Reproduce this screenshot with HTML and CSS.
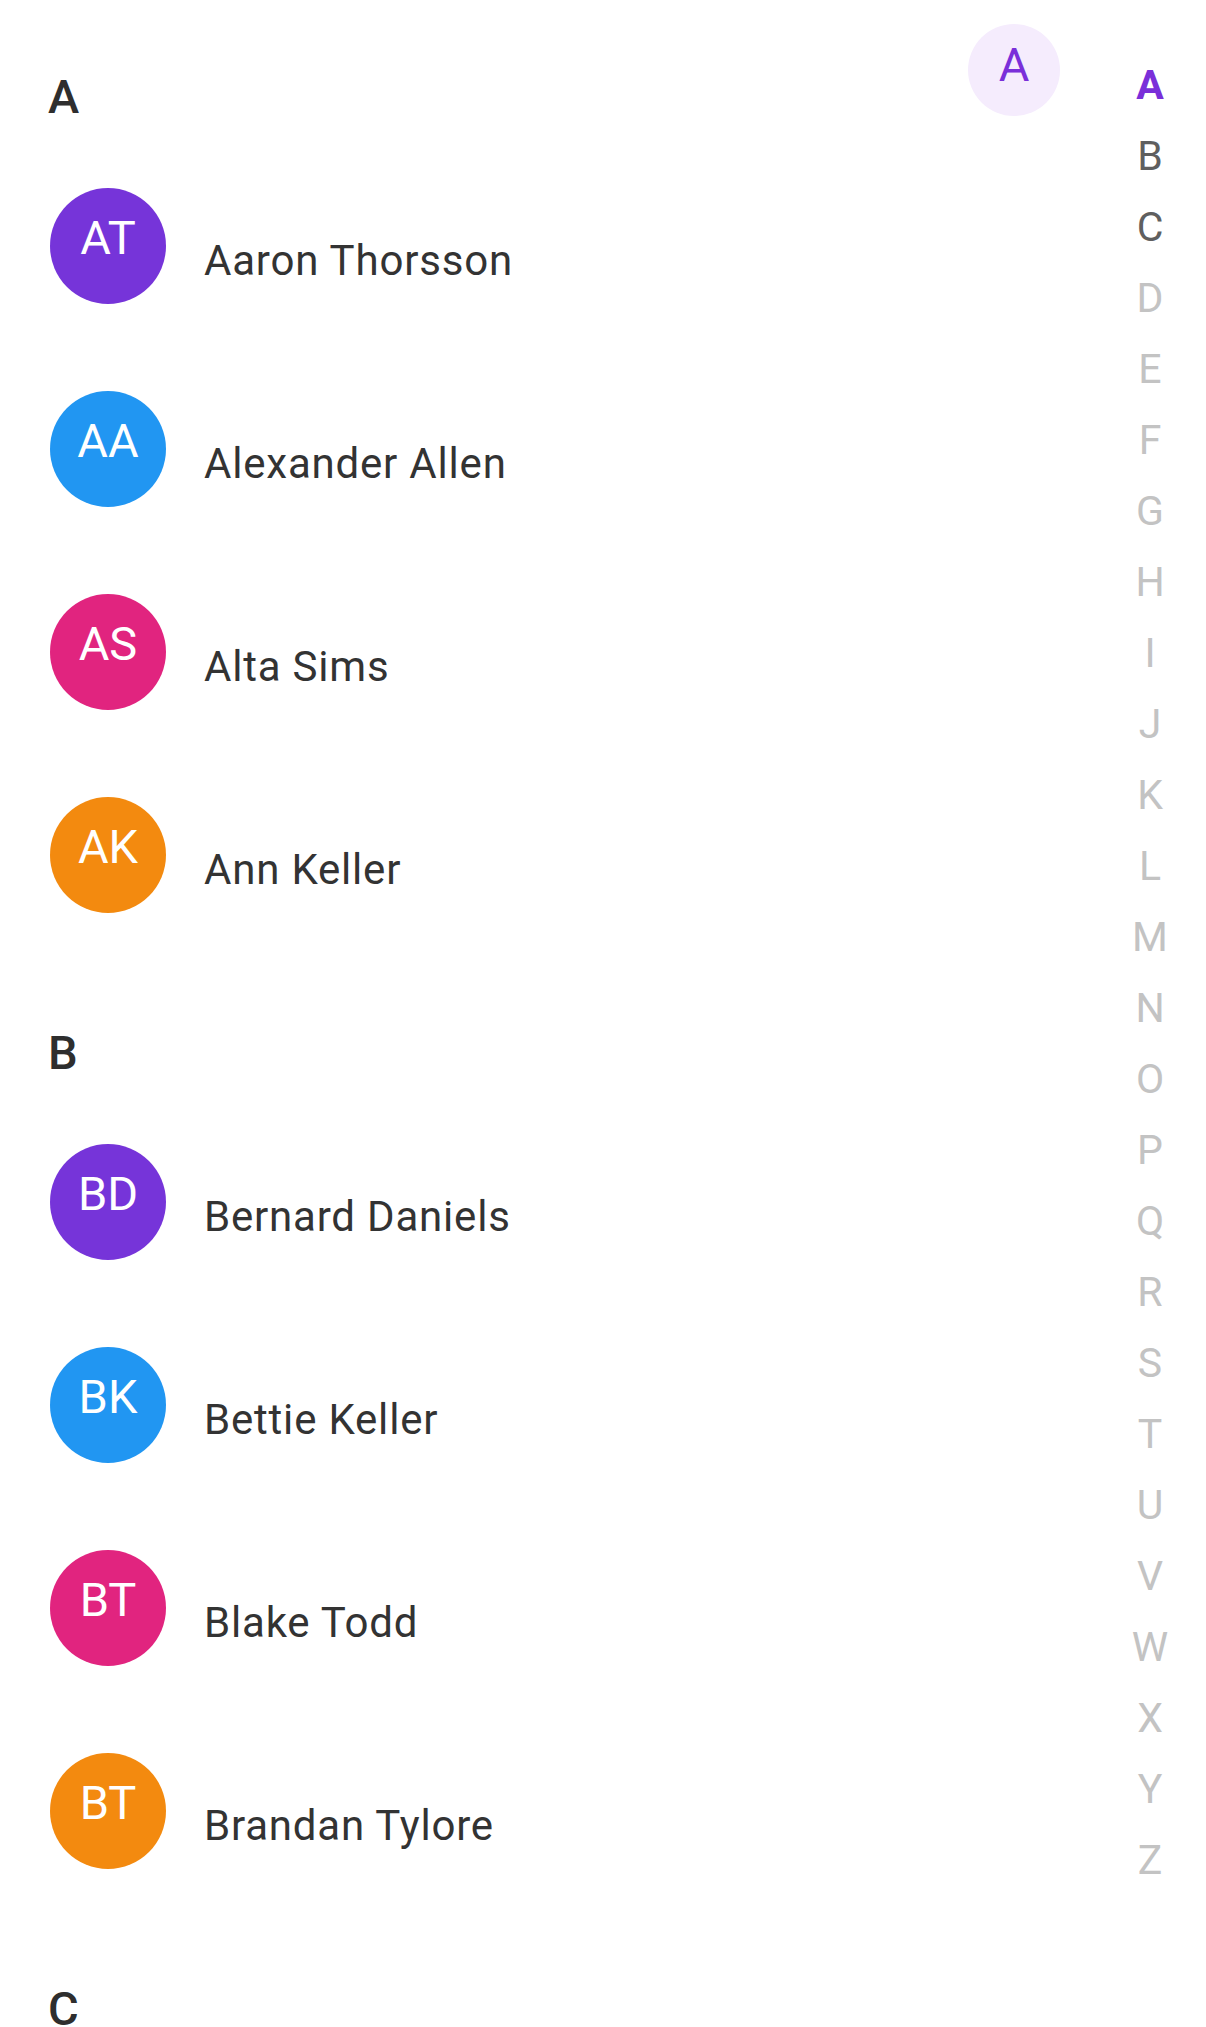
FILE: index.html
```html
<!DOCTYPE html>
<html lang="en">
<head>
<meta charset="utf-8">
<title>Contacts</title>
<link rel="stylesheet" href="styles.css">
</head>
<body>
<div class="app">
  <main class="list">
    <section class="section">
      <h2 class="section-title">A</h2>
      <div class="row"><div class="avatar purple"><span>AT</span></div><div class="name">Aaron Thorsson</div></div>
      <div class="row"><div class="avatar blue"><span>AA</span></div><div class="name">Alexander Allen</div></div>
      <div class="row"><div class="avatar pink"><span>AS</span></div><div class="name">Alta Sims</div></div>
      <div class="row"><div class="avatar orange"><span>AK</span></div><div class="name">Ann Keller</div></div>
    </section>
    <section class="section">
      <h2 class="section-title">B</h2>
      <div class="row"><div class="avatar purple"><span>BD</span></div><div class="name">Bernard Daniels</div></div>
      <div class="row"><div class="avatar blue"><span>BK</span></div><div class="name">Bettie Keller</div></div>
      <div class="row"><div class="avatar pink"><span>BT</span></div><div class="name">Blake Todd</div></div>
      <div class="row"><div class="avatar orange"><span>BT</span></div><div class="name">Brandan Tylore</div></div>
    </section>
    <section class="section">
      <h2 class="section-title">C</h2>
    </section>
  </main>
  <nav class="index">
    <span class="letter active">A</span>
    <span class="letter enabled">B</span>
    <span class="letter enabled">C</span>
    <span class="letter">D</span>
    <span class="letter">E</span>
    <span class="letter">F</span>
    <span class="letter">G</span>
    <span class="letter">H</span>
    <span class="letter">I</span>
    <span class="letter">J</span>
    <span class="letter">K</span>
    <span class="letter">L</span>
    <span class="letter">M</span>
    <span class="letter">N</span>
    <span class="letter">O</span>
    <span class="letter">P</span>
    <span class="letter">Q</span>
    <span class="letter">R</span>
    <span class="letter">S</span>
    <span class="letter">T</span>
    <span class="letter">U</span>
    <span class="letter">V</span>
    <span class="letter">W</span>
    <span class="letter">X</span>
    <span class="letter">Y</span>
    <span class="letter">Z</span>
  </nav>
  <div class="bubble"><span>A</span></div>
</div>
</body>
</html>
```

FILE: styles.css
```css
html, body {
  margin: 0;
  padding: 0;
  background: #ffffff;
  overflow: hidden;
}

body {
  font-family: Roboto, "Noto Sans", "Liberation Sans", sans-serif;
  color: #333333;
}

.app {
  position: relative;
  display: flex;
  width: 1206px;
  height: 2027px;
  overflow: hidden;
}

.list {
  flex: 1;
  padding-left: 48px;
}

.section-title {
  margin: 0;
  padding: 73px 0 24px 0;
  font-size: 47px;
  line-height: 47px;
  font-weight: 500;
  color: #2e2e2e;
}

.row {
  display: flex;
  align-items: center;
  height: 203px;
}

.avatar {
  box-sizing: border-box;
  width: 116px;
  height: 116px;
  margin-left: 2px;
  border-radius: 50%;
  display: flex;
  align-items: center;
  justify-content: center;
  padding-bottom: 16px;
  color: #ffffff;
  font-size: 47px;
  font-weight: 400;
  flex-shrink: 0;
}

.purple { background: #7634d9; }
.blue { background: #2196f2; }
.pink { background: #e1247f; }
.orange { background: #f38a0f; }

.name {
  margin-left: 38px;
  margin-top: 30px;
  font-size: 42px;
  letter-spacing: 0.8px;
  font-weight: 400;
  color: #333333;
  white-space: nowrap;
}

.index {
  width: 80px;
  margin-right: 16px;
  padding-top: 50px;
  display: flex;
  flex-direction: column;
  align-items: center;
}

.letter {
  display: block;
  height: 71px;
  line-height: 71px;
  font-size: 41px;
  color: #c3c3c3;
  text-align: center;
}

.letter.enabled {
  color: #5f5f5f;
}

.letter.active {
  color: #7a2fd9;
  font-weight: 700;
}

.bubble {
  position: absolute;
  left: 968px;
  top: 24px;
  width: 92px;
  height: 92px;
  box-sizing: border-box;
  padding-bottom: 11px;
  border-radius: 50%;
  background: #f5ecfd;
  display: flex;
  align-items: center;
  justify-content: center;
  color: #7a2fd9;
  font-size: 47px;
}
```
